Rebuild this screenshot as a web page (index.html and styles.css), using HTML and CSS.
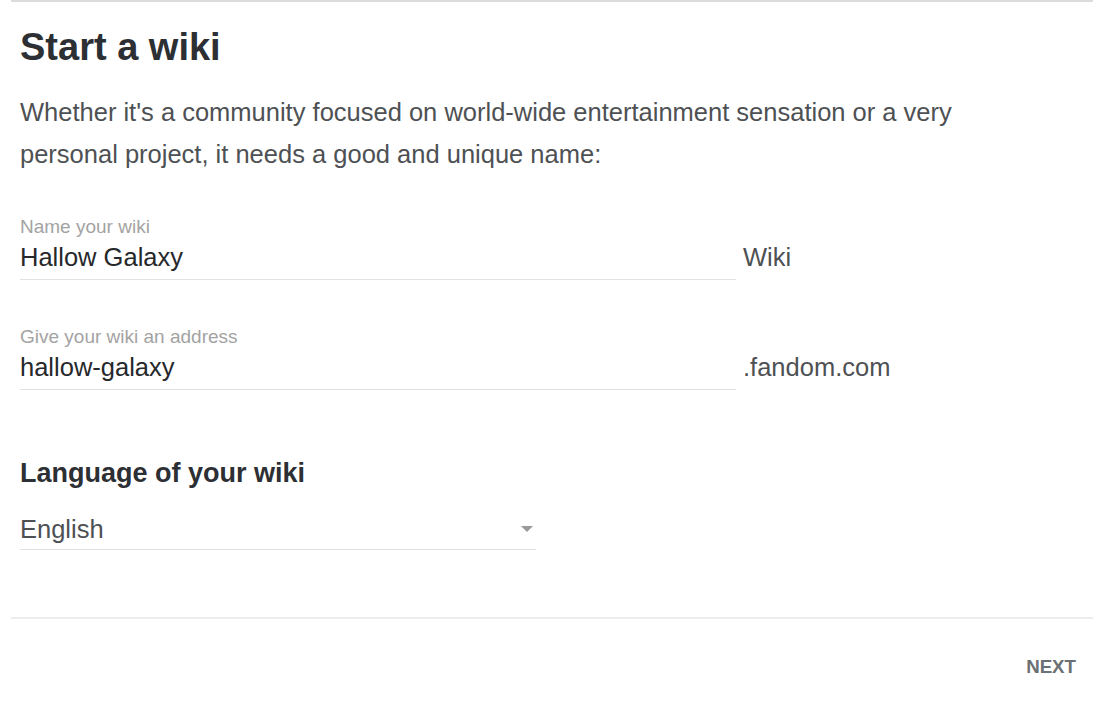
FILE: index.html
```html
<!DOCTYPE html>
<html lang="en">
<head>
<meta charset="utf-8">
<title>Start a wiki</title>
<link rel="stylesheet" href="styles.css">
</head>
<body>
<div class="card">
  <section class="body">
    <h1 class="title">Start a wiki</h1>
    <p class="intro">Whether it's a community focused on world-wide entertainment sensation or a very personal project, it needs a good and unique name:</p>

    <div class="field field-name">
      <div class="field-main">
        <label class="label">Name your wiki</label>
        <div class="value">Hallow Galaxy</div>
      </div>
      <span class="suffix">Wiki</span>
    </div>

    <div class="field field-address">
      <div class="field-main">
        <label class="label">Give your wiki an address</label>
        <div class="value">hallow-galaxy</div>
      </div>
      <span class="suffix">.fandom.com</span>
    </div>

    <h2 class="subtitle">Language of your wiki</h2>
    <div class="select">
      <span class="select-value">English</span>
      <span class="caret"></span>
    </div>
  </section>
  <footer class="footer">
    <span class="next">NEXT</span>
  </footer>
</div>
</body>
</html>
```

FILE: styles.css
```css
html, body {
  margin: 0;
  padding: 0;
  background: #ffffff;
}

body {
  font-family: "Liberation Sans", Arial, sans-serif;
  color: #3a3a3a;
}

.card {
  margin: 0 7px 0 11px;
  border-top: 2px solid #dcdcdc;
}

.body {
  padding: 0 9px;
}

.title {
  margin: 23px 0 0;
  font-size: 38px;
  line-height: 44px;
  font-weight: bold;
  color: #2c2f33;
}

.intro {
  margin: 22px 0 0;
  font-size: 25.5px;
  line-height: 42px;
  color: #4e5154;
  width: 960px;
}

.field {
  display: flex;
  align-items: flex-end;
  margin-top: 41px;
}

.field-address {
  margin-top: 46px;
}

.field-main {
  width: 716px;
  border-bottom: 1px solid #e2e2e2;
  padding-bottom: 7px;
}

.label {
  display: block;
  font-size: 19px;
  line-height: 22px;
  color: #a3a3a3;
}

.value {
  margin-top: 4px;
  font-size: 25.5px;
  line-height: 30px;
  color: #26282b;
}

.suffix {
  margin-left: 7px;
  font-size: 25.5px;
  line-height: 30px;
  padding-bottom: 8px;
  color: #4e5154;
}

.subtitle {
  margin: 67px 0 0;
  font-size: 27px;
  line-height: 32px;
  font-weight: bold;
  color: #2c2f33;
}

.select {
  display: flex;
  align-items: center;
  justify-content: space-between;
  width: 516px;
  margin-top: 25px;
  padding-bottom: 5px;
  border-bottom: 1px solid #e2e2e2;
}

.select-value {
  font-size: 25.5px;
  line-height: 30px;
  color: #4e5154;
}

.caret {
  width: 0;
  height: 0;
  margin-right: 3px;
  border-left: 6px solid transparent;
  border-right: 6px solid transparent;
  border-top: 6px solid #9a9a9a;
}

.footer {
  margin-top: 67px;
  border-top: 2px solid #ececec;
  display: flex;
  justify-content: flex-end;
  padding: 37px 17px 0 0;
}

.next {
  font-size: 18.7px;
  line-height: 22px;
  font-weight: bold;
  color: #6b7075;
}
```
